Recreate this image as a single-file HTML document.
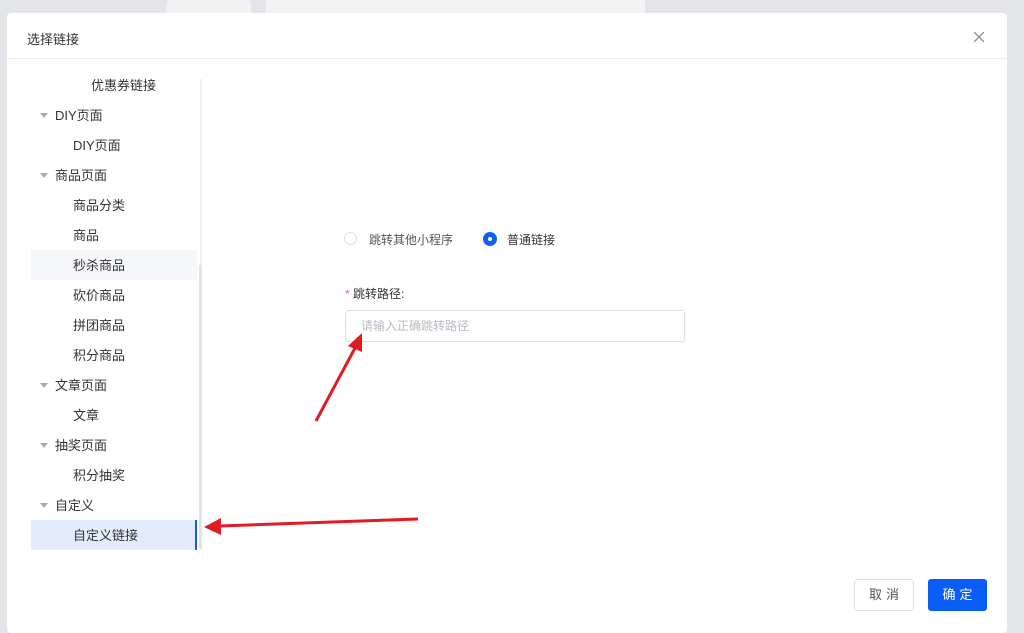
<!DOCTYPE html>
<html><head><meta charset="utf-8"><style>
body{margin:0;width:1024px;height:618px;background:#e4e5e9;position:relative;overflow:hidden;font-family:"Liberation Sans","Noto Sans CJK SC",sans-serif;font-size:13px;color:#333}
.abs{position:absolute}
.modal{left:7px;top:13px;width:1000px;height:620px;background:#fff;border-radius:4px}
.row{position:absolute;left:31px;width:166px;height:30px;line-height:31px}
.tri{position:absolute;width:0;height:0;border-left:4px solid transparent;border-right:4px solid transparent;border-top:5px solid #a8abb2;top:13px}
</style></head><body>
<div class="abs" style="left:166px;top:0;width:85px;height:13px;background:#f0f1f3;border-radius:4px 4px 0 0"></div>
<div class="abs" style="left:266px;top:0;width:379px;height:13px;background:#f3f3f4"></div>
<div class="abs modal">
 <div class="abs" style="left:20px;top:16px;font-size:13px;color:#333">选择链接</div>
 <svg class="abs" style="left:967px;top:19px" width="10" height="10"><path d="M0 0L10 10M10 0L0 10" stroke="#888" stroke-width="1.2"/></svg>
 <div class="abs" style="left:0;top:45px;width:1000px;height:1px;background:#ececec"></div>
</div>
<div class="abs" style="left:200px;top:79px;width:2px;height:470px;background:#f0f0f0"></div>
<div class="abs" style="left:199px;top:265px;width:3px;height:284px;background:#e3e3e3"></div>
<div class="row" style="top:250px;background:#f5f7fa"></div>
<div class="row" style="top:520px;background:#e2ecfc;border-right:2px solid #1a5ed8;width:164px"></div>
<div class="row" style="top:70px;padding-left:60px">优惠券链接</div>
<div class="row" style="top:100px;padding-left:24px"><span class="tri" style="left:9px"></span>DIY页面</div>
<div class="row" style="top:130px;padding-left:42px">DIY页面</div>
<div class="row" style="top:160px;padding-left:24px"><span class="tri" style="left:9px"></span>商品页面</div>
<div class="row" style="top:190px;padding-left:42px">商品分类</div>
<div class="row" style="top:220px;padding-left:42px">商品</div>
<div class="row" style="top:250px;padding-left:42px">秒杀商品</div>
<div class="row" style="top:280px;padding-left:42px">砍价商品</div>
<div class="row" style="top:310px;padding-left:42px">拼团商品</div>
<div class="row" style="top:340px;padding-left:42px">积分商品</div>
<div class="row" style="top:370px;padding-left:24px"><span class="tri" style="left:9px"></span>文章页面</div>
<div class="row" style="top:400px;padding-left:42px">文章</div>
<div class="row" style="top:430px;padding-left:24px"><span class="tri" style="left:9px"></span>抽奖页面</div>
<div class="row" style="top:460px;padding-left:42px">积分抽奖</div>
<div class="row" style="top:490px;padding-left:24px"><span class="tri" style="left:9px"></span>自定义</div>
<div class="row" style="top:520px;padding-left:42px">自定义链接</div>

<div class="abs" style="left:344px;top:232px;width:13px;height:13px;border:1px solid #dcdfe6;border-radius:50%;box-sizing:border-box"></div>
<div class="abs" style="left:369px;top:231px;font-size:12px;color:#555">跳转其他小程序</div>
<div class="abs" style="left:483px;top:232px;width:14px;height:14px;background:#1060f0;border-radius:50%"><div style="margin:5px;width:4px;height:4px;background:#fff;border-radius:50%"></div></div>
<div class="abs" style="left:507px;top:231px;font-size:12px;color:#333">普通链接</div>
<div class="abs" style="left:345px;top:285px;font-size:12px;color:#333"><span style="color:#f56c6c">*</span> 跳转路径:</div>
<div class="abs" style="left:345px;top:310px;width:340px;height:32px;border:1px solid #dcdfe6;border-radius:3px;box-sizing:border-box;padding-left:15px;line-height:30px;font-size:12px;color:#b8bbc2">请输入正确跳转路径</div>

<div class="abs" style="left:854px;top:579px;width:60px;height:32px;border:1px solid #dcdfe6;border-radius:3px;box-sizing:border-box;text-align:center;line-height:30px;color:#555;letter-spacing:4px;text-indent:4px">取消</div>
<div class="abs" style="left:928px;top:579px;width:59px;height:32px;background:#0b5ef5;border-radius:3px;text-align:center;line-height:32px;color:#fff;letter-spacing:4px;text-indent:4px">确定</div>

<svg class="abs" style="left:0;top:0" width="1024" height="618">
<line x1="316" y1="421" x2="355" y2="348" stroke="#e01b22" stroke-width="3"/>
<polygon points="362,333 348,346 362,352" fill="#e01b22"/>
<line x1="418" y1="519" x2="220" y2="526" stroke="#e01b22" stroke-width="3"/>
<polygon points="204,527 221,518 221,535" fill="#e01b22"/>
</svg>
</body></html>
